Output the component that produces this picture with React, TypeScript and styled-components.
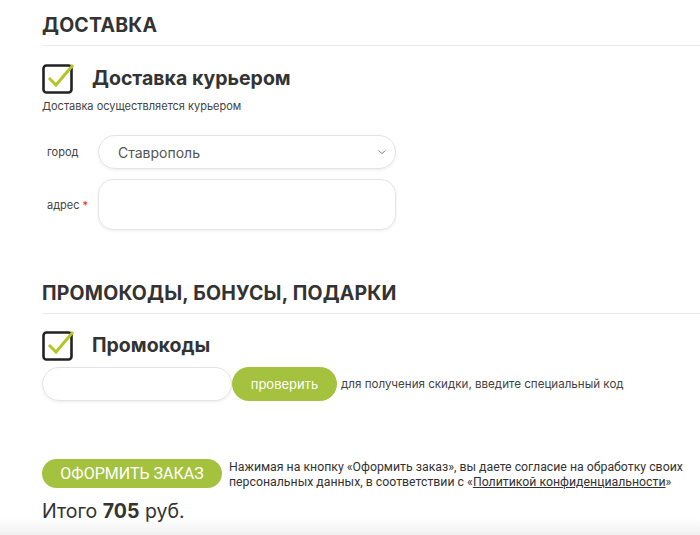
import React from "react";
import styled, { createGlobalStyle } from "styled-components";

const Global = createGlobalStyle`
  html, body { margin: 0; padding: 0; background: #fff; }
  body { font-family: "Inter", "Noto Sans", sans-serif; color: #333; }
  * { box-sizing: border-box; }
`;

const Page = styled.div`
  width: 700px;
  height: 535px;
  overflow: hidden;
  position: relative;
  padding: 13px 0 0 42px;
  background: linear-gradient(to bottom, #fff 0, #fff 518px, #f0f0f0 535px);
`;

const Section = styled.section<{ $top?: number }>`
  display: flex;
  flex-direction: column;
  margin-top: ${(p) => p.$top ?? 0}px;
`;

const Heading = styled.h2`
  margin: 0;
  font-family: "Inter", sans-serif;
  font-weight: 700;
  font-size: 19.5px;
  letter-spacing: 0.2px;
  line-height: 24px;
  color: #333;
  padding-bottom: 8px;
  border-bottom: 1.5px solid #ececec;
`;

const CheckRow = styled.div<{ $top: number }>`
  display: flex;
  align-items: center;
  gap: 16px;
  margin-top: ${(p) => p.$top}px;
`;

const CheckTitle = styled.span`
  font-family: "Inter", sans-serif;
  font-weight: 700;
  font-size: 19.5px;
  color: #333;
`;

const Note = styled.div`
  font-size: 11px;
  color: #444;
  margin-top: 5px;
`;

const FieldRow = styled.div<{ $top: number }>`
  display: flex;
  align-items: center;
  margin-top: ${(p) => p.$top}px;
`;

const Label = styled.span`
  width: 56px;
  padding-left: 5px;
  font-size: 11px;
  color: #444;
`;

const Req = styled.span`
  color: #e3242b;
  margin-left: 3px;
`;

const SelectBox = styled.div`
  width: 298px;
  height: 34px;
  border: 1px solid #e4e4e4;
  border-radius: 17px;
  box-shadow: 0 1px 3px rgba(0, 0, 0, 0.08);
  display: flex;
  align-items: center;
  justify-content: space-between;
  padding: 0 8px 0 19px;
  font-size: 14px;
  color: #555;
`;

const TextArea = styled.div`
  width: 298px;
  height: 51px;
  border: 1px solid #e4e4e4;
  border-radius: 15px;
  box-shadow: 0 1px 3px rgba(0, 0, 0, 0.08);
`;

const PromoRow = styled.div`
  display: flex;
  align-items: center;
  margin-top: 6px;
`;

const PromoInput = styled.div`
  width: 190px;
  height: 34px;
  border: 1px solid #e4e4e4;
  border-radius: 17px;
  box-shadow: 0 1px 3px rgba(0, 0, 0, 0.08);
`;

const GreenButton = styled.button<{ $w: number; $h: number; $fs: number; $upper?: boolean }>`
  width: ${(p) => p.$w}px;
  height: ${(p) => p.$h}px;
  border: none;
  border-radius: ${(p) => p.$h / 2}px;
  background: #a5c23f;
  color: #fff;
  font-family: ${(p) => (p.$upper ? '"Roboto", sans-serif' : '"Inter", sans-serif')};
  font-size: ${(p) => p.$fs}px;
  text-transform: ${(p) => (p.$upper ? "uppercase" : "none")};
  padding: 0;
  flex-shrink: 0;
`;

const Hint = styled.span`
  font-size: 11.6px;
  color: #444;
  margin-left: 4px;
`;

const OrderRow = styled.div`
  display: flex;
  align-items: flex-start;
  margin-top: 58px;
`;

const Consent = styled.p`
  margin: 0 0 0 7px;
  padding-top: 1px;
  font-family: "Roboto", sans-serif;
  font-size: 12.3px;
  line-height: 15px;
  color: #333;
  width: 470px;
`;

const Link = styled.a`
  color: #333;
  text-decoration: underline;
`;

const Total = styled.div`
  margin-top: 9px;
  font-family: "Inter", sans-serif;
  font-size: 19.5px;
  line-height: 24px;
  color: #333;
`;

const Check = () => (
  <svg width="34" height="32" viewBox="0 0 34 32">
    <rect x="1.5" y="3.5" width="28" height="27" rx="3" fill="none" stroke="#222" strokeWidth="2.6" />
    <path d="M7 16 L14 23 L31 3" fill="none" stroke="#b2c624" strokeWidth="3" />
  </svg>
);

const Chevron = () => (
  <svg width="10" height="6" viewBox="0 0 10 6">
    <path d="M1.5 1.5 L5 4.5 L8.5 1.5" fill="none" stroke="#888" strokeWidth="1" />
  </svg>
);

export default function App() {
  return (
    <>
      <Global />
      <Page>
        <Section>
          <Heading>ДОСТАВКА</Heading>
          <CheckRow $top={16}>
            <Check />
            <CheckTitle>Доставка курьером</CheckTitle>
          </CheckRow>
          <Note>Доставка осуществляется курьером</Note>
          <FieldRow $top={22}>
            <Label>город</Label>
            <SelectBox>
              Ставрополь
              <Chevron />
            </SelectBox>
          </FieldRow>
          <FieldRow $top={10}>
            <Label>
              адрес<Req>*</Req>
            </Label>
            <TextArea />
          </FieldRow>
        </Section>
        <Section $top={51}>
          <Heading>ПРОМОКОДЫ, БОНУСЫ, ПОДАРКИ</Heading>
          <CheckRow $top={15}>
            <Check />
            <CheckTitle>Промокоды</CheckTitle>
          </CheckRow>
          <PromoRow>
            <PromoInput />
            <GreenButton $w={105} $h={34} $fs={13}>проверить</GreenButton>
            <Hint>для получения скидки, введите специальный код</Hint>
          </PromoRow>
        </Section>
        <OrderRow>
          <GreenButton $w={180} $h={29} $fs={16} $upper>Оформить заказ</GreenButton>
          <Consent>
            Нажимая на кнопку «Оформить заказ», вы даете согласие на обработку своих персональных данных, в соответствии с «<Link>Политикой конфиденциальности</Link>»
          </Consent>
        </OrderRow>
        <Total>
          Итого <b>705</b> руб.
        </Total>
      </Page>
    </>
  );
}
